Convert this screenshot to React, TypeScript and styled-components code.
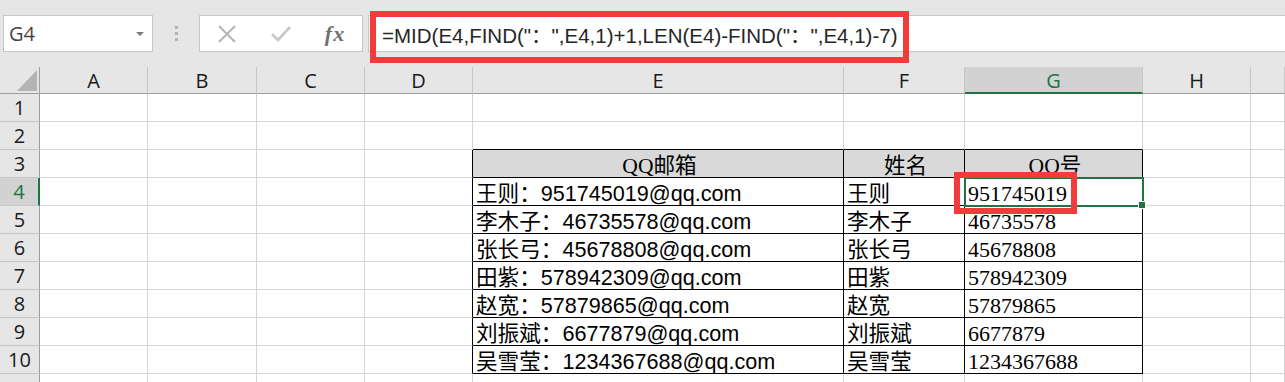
import styled, { createGlobalStyle } from "styled-components";

const GlobalStyle = createGlobalStyle`
  html, body {
    margin: 0;
    padding: 0;
    background: #ffffff;
    overflow: hidden;
  }
  body {
    font-family: "Open Sans", "Noto Sans CJK SC", sans-serif;
  }
`;

// sheet geometry, Excel-ish
const COL_WIDTHS = "40px 108px 109px 108px 108px 371px 121px 178px 108px 1fr";
const COLS = ["A", "B", "C", "D", "E", "F", "G", "H", ""];
const ROW_COUNT = 11;
const GREEN = "#217346";
const RED = "#f43b3b";

const rows: [string, string, string][] = [
  ["王则：951745019@qq.com", "王则", "951745019"],
  ["李木子：46735578@qq.com", "李木子", "46735578"],
  ["张长弓：45678808@qq.com", "张长弓", "45678808"],
  ["田紫：578942309@qq.com", "田紫", "578942309"],
  ["赵宽：57879865@qq.com", "赵宽", "57879865"],
  ["刘振斌：6677879@qq.com", "刘振斌", "6677879"],
  ["吴雪莹：1234367688@qq.com", "吴雪莹", "1234367688"],
];

const Page = styled.div`
  width: 1285px;
  height: 382px;
  overflow: hidden;
  display: flex;
  flex-direction: column;
  background: #ffffff;
`;

/* ---------- formula bar ---------- */

const FormulaBar = styled.div`
  height: 67px;
  flex-shrink: 0;
  box-sizing: border-box;
  padding: 15px 0 0 3px;
  background: #e6e6e6;
  display: flex;
  align-items: flex-start;
`;

const NameBox = styled.div`
  width: 150px;
  height: 37px;
  box-sizing: border-box;
  background: #ffffff;
  border: 1px solid #c6c6c6;
  display: flex;
  align-items: center;
  justify-content: space-between;
  padding: 0 8px 0 5px;
  font-size: 20px;
  color: #444444;
`;

const DropArrow = styled.span`
  width: 0;
  height: 0;
  border-left: 4px solid transparent;
  border-right: 4px solid transparent;
  border-top: 4px solid #7a7a7a;
`;

const Grip = styled.div`
  width: 46px;
  height: 37px;
  display: flex;
  flex-direction: column;
  align-items: center;
  justify-content: center;
  gap: 3px;
`;

const GripDot = styled.span`
  width: 3px;
  height: 3px;
  background: #b3b3b3;
`;

const ButtonBox = styled.div`
  width: 164px;
  height: 37px;
  box-sizing: border-box;
  background: #ffffff;
  border: 1px solid #c6c6c6;
  display: flex;
`;

const BarButton = styled.div`
  width: 54px;
  height: 100%;
  display: flex;
  align-items: center;
  justify-content: center;
`;

const FxLabel = styled.span`
  font-family: "Liberation Serif", serif;
  font-style: italic;
  font-weight: bold;
  font-size: 22px;
  color: #707070;
  letter-spacing: 1px;
`;

const FormulaInput = styled.div`
  position: relative;
  flex: 1;
  height: 37px;
  margin-left: 5px;
  box-sizing: border-box;
  background: #ffffff;
  border: 1px solid #c6c6c6;
  border-right: none;
  padding-left: 13px;
  display: flex;
  align-items: center;
  font-family: "Liberation Sans", "Noto Sans CJK SC", sans-serif;
  font-size: 20.5px;
  color: #262626;
  white-space: pre;
`;

// red annotation frame drawn over the screenshot
const Callout = styled.div<{ $l: number; $t: number; $w: number; $h: number }>`
  position: absolute;
  left: ${(p) => p.$l}px;
  top: ${(p) => p.$t}px;
  width: ${(p) => p.$w}px;
  height: ${(p) => p.$h}px;
  box-sizing: border-box;
  border: 6px solid ${RED};
  z-index: 5;
  pointer-events: none;
`;

/* ---------- grid ---------- */

const Sheet = styled.div`
  display: grid;
  grid-template-columns: ${COL_WIDTHS};
  grid-template-rows: 27px repeat(${ROW_COUNT}, 28px);
  font-size: 20px;
`;

const Corner = styled.div`
  box-sizing: border-box;
  background: #e6e6e6;
  border-right: 1px solid #9e9e9e;
  border-bottom: 1px solid #9e9e9e;
`;

const ColHead = styled.div<{ $active?: boolean }>`
  box-sizing: border-box;
  background: ${(p) => (p.$active ? "#d2d2d2" : "#e6e6e6")};
  color: ${(p) => (p.$active ? GREEN : "#1a1a1a")};
  border-right: 1px solid #c6c6c6;
  border-bottom: ${(p) => (p.$active ? `2px solid ${GREEN}` : "1px solid #9e9e9e")};
  text-align: center;
  line-height: 27px;
  font-size: 20px;
`;

const RowHead = styled.div<{ $active?: boolean }>`
  box-sizing: border-box;
  background: ${(p) => (p.$active ? "#d2d2d2" : "#e6e6e6")};
  color: ${(p) => (p.$active ? GREEN : "#1a1a1a")};
  border-right: ${(p) => (p.$active ? `2px solid ${GREEN}` : "1px solid #9e9e9e")};
  border-bottom: 1px solid #c6c6c6;
  text-align: center;
  line-height: 28px;
  font-size: 20px;
`;

type Kind = "mail" | "name" | "qq" | "head";

const fontFor = (k?: Kind) => {
  switch (k) {
    case "qq":
    case "head":
      return `"Liberation Serif", "Noto Sans CJK SC", serif`;
    default:
      return `"Liberation Sans", "Noto Sans CJK SC", sans-serif`;
  }
};

const Cell = styled.div<{
  $r?: boolean;
  $b?: boolean;
  $kind?: Kind;
  $sel?: boolean;
}>`
  position: ${(p) => (p.$sel ? "relative" : "static")};
  box-sizing: border-box;
  min-width: 0;
  border-right: 1px solid ${(p) => (p.$r ? "#000000" : "#d4d4d4")};
  border-bottom: 1px solid ${(p) => (p.$b ? "#000000" : "#d4d4d4")};
  background: ${(p) => (p.$kind === "head" ? "#d9d9d9" : "#ffffff")};
  color: #000000;
  font-family: ${(p) => fontFor(p.$kind)};
  font-size: ${(p) => (p.$kind === "qq" ? "22px" : "21.6px")};
  line-height: 24px;
  padding: 4px 0 0 3px;
  text-align: ${(p) => (p.$kind === "head" ? "center" : "left")};
  white-space: nowrap;
`;

const Selection = styled.div`
  position: absolute;
  left: -1px;
  top: -1px;
  right: -2px;
  bottom: -2px;
  border: 2px solid ${GREEN};
  z-index: 3;
  pointer-events: none;
`;

const FillHandle = styled.span`
  position: absolute;
  right: -4px;
  bottom: -4px;
  width: 6px;
  height: 6px;
  background: ${GREEN};
  border: 1px solid #ffffff;
`;

function CornerTriangle() {
  return (
    <svg width="40" height="27" viewBox="0 0 40 27">
      <polygon points="37,3 37,24 17,24" fill="#b4b4b4" />
    </svg>
  );
}

function CancelIcon() {
  return (
    <svg width="20" height="18" viewBox="0 0 20 18">
      <path d="M2 1 L18 17 M18 1 L2 17" stroke="#b4b4b4" strokeWidth="2" fill="none" />
    </svg>
  );
}

function EnterIcon() {
  return (
    <svg width="20" height="16" viewBox="0 0 20 16">
      <path d="M1 8 L7 14 L19 1" stroke="#c8c8c8" strokeWidth="2.6" fill="none" />
    </svg>
  );
}

export default function App() {
  const renderCell = (row: number, col: number) => {
    const key = `${row}-${col}`;
    const inTable = row >= 3 && row <= 10;
    const tableCol = col >= 4 && col <= 6; // E,F,G

    // borders that belong to the table
    const right = inTable && (col === 3 || tableCol);
    const bottom = tableCol && row >= 2 && row <= 10;

    if (row === 3 && tableCol) {
      const label = ["QQ邮箱", "姓名", "QQ号"][col - 4];
      return (
        <Cell key={key} $r $b $kind="head">
          {label}
        </Cell>
      );
    }

    if (row >= 4 && row <= 10 && tableCol) {
      const rec = rows[row - 4];
      const kind: Kind = col === 4 ? "mail" : col === 5 ? "name" : "qq";
      const selected = row === 4 && col === 6;
      return (
        <Cell key={key} $r $b $kind={kind} $sel={selected}>
          {rec[col - 4]}
          {selected && (
            <>
              <Selection>
                <FillHandle />
              </Selection>
              <Callout $l={-11} $t={-6} $w={123} $h={42} />
            </>
          )}
        </Cell>
      );
    }

    return <Cell key={key} $r={right} $b={bottom} />;
  };

  return (
    <>
      <GlobalStyle />
      <Page>
        <FormulaBar>
          <NameBox>
            <span>G4</span>
            <DropArrow />
          </NameBox>
          <Grip>
            <GripDot />
            <GripDot />
            <GripDot />
          </Grip>
          <ButtonBox>
            <BarButton>
              <CancelIcon />
            </BarButton>
            <BarButton>
              <EnterIcon />
            </BarButton>
            <BarButton>
              <FxLabel>fx</FxLabel>
            </BarButton>
          </ButtonBox>
          <FormulaInput>
            =MID(E4,FIND("：",E4,1)+1,LEN(E4)-FIND("：",E4,1)-7)
            <Callout $l={1} $t={-5} $w={539} $h={52} />
          </FormulaInput>
        </FormulaBar>

        <Sheet>
          <Corner>
            <CornerTriangle />
          </Corner>
          {COLS.map((c, i) => (
            <ColHead key={`h${i}`} $active={c === "G"}>
              {c}
            </ColHead>
          ))}

          {Array.from({ length: ROW_COUNT }, (_, r) => {
            const row = r + 1;
            // last row is only a sliver at the window edge, its number is not visible
            return [
              <RowHead key={`r${row}`} $active={row === 4}>
                {row < ROW_COUNT ? row : ""}
              </RowHead>,
              ...COLS.map((_, col) => renderCell(row, col)),
            ];
          })}
        </Sheet>
      </Page>
    </>
  );
}
